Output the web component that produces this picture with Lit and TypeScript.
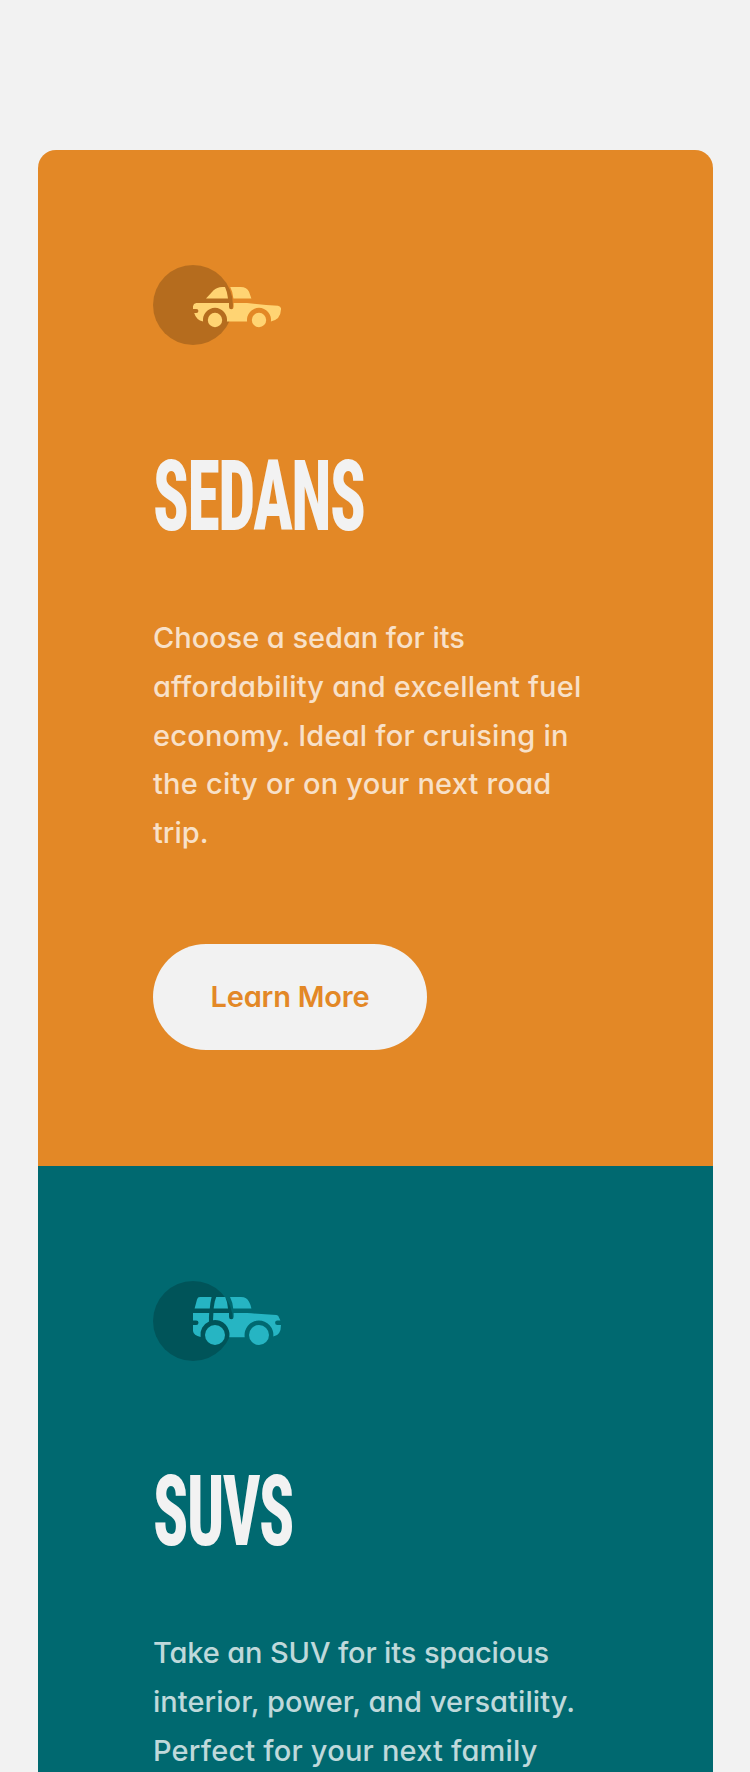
import { LitElement, html, css, svg } from "lit";
import { customElement, property } from "lit/decorators.js";

type Line = { text: string; ls: number };
type Car = { kind: string; title: string; stretch: number; lines: Line[] };

const cars: Car[] = [
  {
    kind: "sedans", title: "SEDANS", stretch: 0.67,
    lines: [
      { text: "Choose a sedan for its", ls: -0.04 },
      { text: "affordability and excellent fuel", ls: 0.17 },
      { text: "economy. Ideal for cruising in", ls: 0.21 },
      { text: "the city or on your next road", ls: 0.21 },
      { text: "trip.", ls: 0 },
    ],
  },
  {
    kind: "suvs", title: "SUVS", stretch: 0.66,
    lines: [
      { text: "Take an SUV for its spacious", ls: -0.13 },
      { text: "interior, power, and versatility.", ls: 0.06 },
      { text: "Perfect for your next family", ls: 0.2 },
      { text: "and off-road adventures.", ls: 0 },
    ],
  },
];

const sedan = svg`
  <path d="M26.5 16.8 L30.2 12.8 Q32 11 34.6 11 H36 Q37.2 13.5 37.5 16.8Z"/>
  <path d="M38.6 11 H43.8 Q47 11 48 13.4 L49.2 16.8 H40.2 Q40 13.6 38.6 11Z"/>
  <path d="M21.6 19 H38 V21 A1.15 1.15 0 0 0 40.3 21 V19 H47 Q55 19.9 62.5 20.4 Q64.2 20.7 64 22.3 Q63.8 27.4 58.95 28.2 A6 6 0 1 0 47.05 28.2 H36.95 A6 6 0 1 0 25.05 28.2 Q21.6 27.6 20.6 24 H21.7 A1 1 0 0 0 21.7 22 H20 V20.6 Q20.2 19.2 21.6 19Z"/>
  <circle cx="31" cy="27.5" r="3.6"/><circle cx="53" cy="27.5" r="3.6"/>`;

const suv = svg`
  <path d="M20.8 13.7 L22 9.2 Q22.3 8 23.5 8 H29.3 Q28.6 10.8 28.4 13.7Z"/>
  <path d="M31.6 8 H36.1 Q37.3 10.5 37.5 13.7 H30.3 Q30.6 10.5 31.6 8Z"/>
  <path d="M38.5 8 H44 Q47 8.1 48 10.4 Q48.9 12 49.2 13.7 H40.1 Q39.9 10.8 38.5 8Z"/>
  <path d="M20 16 H28.1 Q27.9 18 28 20.2 A7.2 7.2 0 0 0 23.8 28 Q20.3 27.3 20 25 V22 H21.6 A1.15 1.15 0 0 0 21.6 19.7 H20Z"/>
  <path d="M30.2 16 H38 V18 A1.15 1.15 0 0 0 40.3 18 V16 H47 Q54 16.6 61.7 17 Q62.8 17.1 63 18.2 L63.7 19.7 H62.2 A1.15 1.15 0 0 0 62.2 22 H64 Q64 27.2 60.13 27.8 A7.2 7.2 0 1 0 45.87 28.1 H38.1 A7.2 7.2 0 0 0 30 19.6Z"/>
  <circle cx="31" cy="27" r="5"/><circle cx="53" cy="27" r="5"/>`;

@customElement("car-card")
class CarCard extends LitElement {
  @property({ attribute: false }) car!: Car;

  static styles = css`
    :host { display: block; }
    .card { padding: 115px 115px 116.25px; }
    .sedans { background: #e38826; color: #e38826; }
    .suvs { background: #006970; color: #006970; }
    .icon { display: block; width: 128px; height: 80px; }
    .sedans .car { fill: #ffd473; }
    .suvs .car { fill: #26b5c3; }
    .title { margin: 90px 0 0; height: 123px; font: 800 98.5px/123px Roboto, sans-serif; font-stretch: 75%; letter-spacing: -2.3px; color: #f2f2f2; }
    .suvs .title { margin-top: 89px; }
    .stretch { display: inline-block; transform-origin: 0 50%; white-space: nowrap; }
    .copy { margin: 56px 0 0; font: 550 29px/48.75px Inter, sans-serif; font-feature-settings: "cv11"; color: rgba(255, 255, 255, 0.75); }
    .line { display: block; white-space: nowrap; }
    .button { display: flex; align-items: center; justify-content: center; width: 274px; height: 106px; margin: 86px 0 0; padding: 0; border: 0; border-radius: 53px; background: #f2f2f2; color: inherit; font: 600 29px/48px Inter, sans-serif; letter-spacing: -0.2px; font-feature-settings: "cv11"; }
  `;

  render() {
    const { kind, title, stretch, lines } = this.car;
    return html`<section class="card ${kind}">
      <svg class="icon" viewBox="0 0 64 40">
        <circle cx="20" cy="20" r="20" opacity="0.2" />
        <g class="car">${kind === "sedans" ? sedan : suv}</g>
      </svg>
      <h2 class="title"><span class="stretch" style="transform: scaleX(${stretch})">${title}</span></h2>
      <p class="copy">${lines.map((l) => html`<span class="line" style="letter-spacing: ${l.ls}px">${l.text}</span>`)}</p>
      <button class="button">Learn More</button>
    </section>`;
  }
}

@customElement("app-root")
class AppRoot extends LitElement {
  static styles = css`
    :host { display: block; height: 1772px; overflow: hidden; background: #f2f2f2; }
    .stack { margin: 150px 37px 0 38px; border-radius: 18px; overflow: hidden; }
  `;
  render() {
    return html`<main class="stack">${cars.map((c) => html`<car-card .car=${c}></car-card>`)}</main>`;
  }
}
